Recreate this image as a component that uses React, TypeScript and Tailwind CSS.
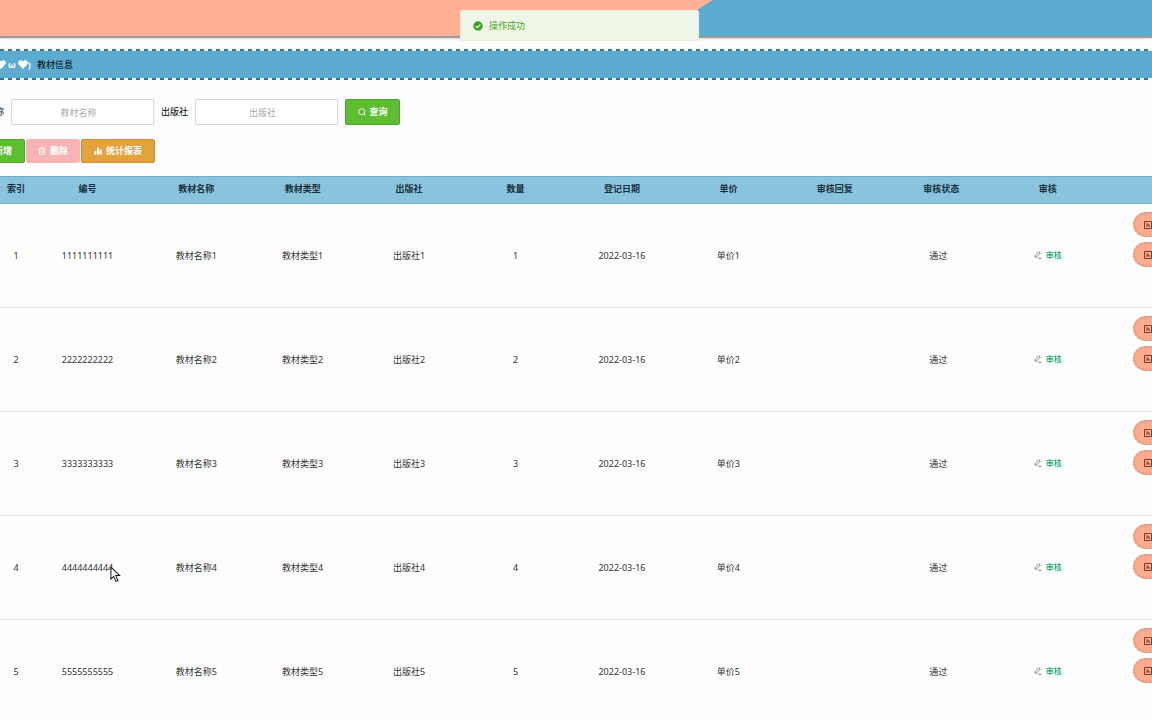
import React, { useState } from 'react';

interface Textbook {
  id: number;
  code: string;
  name: string;
  type: string;
  publisher: string;
  amount: number;
  date: string;
  price: string;
  reply: string;
  status: string;
}

const textbooks: Textbook[] = [1, 2, 3, 4, 5].map((n) => ({
  id: n,
  code: String(n).repeat(10),
  name: '教材名称' + n,
  type: '教材类型' + n,
  publisher: '出版社' + n,
  amount: n,
  date: '2022-03-16',
  price: '单价' + n,
  reply: '',
  status: '通过',
}));

const headers = ['索引', '编号', '教材名称', '教材类型', '出版社', '数量', '登记日期', '单价', '审核回复', '审核状态', '审核'];

function SearchIcon() {
  return (
    <svg viewBox="0 0 16 16" className="size-2" fill="none" stroke="currentColor" strokeWidth="1.8" aria-hidden="true">
      <circle cx="7.5" cy="7.5" r="6" />
      <path d="M12 12L15 15" />
    </svg>
  );
}

function TrashIcon() {
  return (
    <svg viewBox="0 0 16 16" className="size-2" fill="none" stroke="currentColor" strokeWidth="1.6" aria-hidden="true">
      <path d="M1 4h14M5.5 4V1.500h5V4M3 4v11h10V4M6.300 7v5M9.700 7v5" />
    </svg>
  );
}

function ChartIcon() {
  return (
    <svg viewBox="0 0 16 16" className="size-2" fill="currentColor" aria-hidden="true">
      <rect x="0.5" y="8" width="4.2" height="7" rx="1" />
      <rect x="5.9" y="1" width="4.2" height="14" rx="1" />
      <rect x="11.3" y="5" width="4.2" height="10" rx="1" />
    </svg>
  );
}

function EditIcon() {
  return (
    <svg viewBox="0 0 16 16" className="size-2 text-gray-500" fill="none" stroke="currentColor" strokeWidth="1.5" aria-hidden="true">
      <path d="M2 13l1-4.500L9 1.500l3.500 2.500L6.500 11.500zM8 14.500h7" />
    </svg>
  );
}

function DetailIcon() {
  return (
    <svg viewBox="0 0 16 16" className="size-2.5 shrink-0" fill="none" stroke="currentColor" strokeWidth="1.5" aria-hidden="true">
      <path d="M2.400 2.400h11.200v11.200H2.400zM6.500 5v6.200M6.500 8h3.500v3.200" />
    </svg>
  );
}

function Heart() {
  return (
    <svg viewBox="0 0 16 14" className="h-[9px] w-2.5" fill="currentColor" aria-hidden="true">
      <path d="M8 14L1.500 7.500C-1 4.500 .5 0 4 0c2 0 3.300 1 4 2.500C8.700 1 10 0 12 0c3.500 0 5 4.500 2.500 7.500z" />
    </svg>
  );
}

function DashedLine() {
  return <div className="h-0.5 bg-[repeating-linear-gradient(90deg,#3a7693_0_4px,#f4fafc_4px_8px)]"></div>;
}

function RowActions() {
  const className = 'flex h-[25px] w-20 items-center rounded-full border-2 border-dotted border-[#d79c86] bg-[#fcab8f] pl-2 text-[#6b3629]';
  return (
    <div className="ml-8 flex flex-col gap-[5px]">
      <button type="button" aria-label="详情" className={className}><DetailIcon /></button>
      <button type="button" aria-label="修改" className={className}><DetailIcon /></button>
    </div>
  );
}

export default function App() {
  const [name, setName] = useState('');
  const [publisher, setPublisher] = useState('');

  const inputClass = 'h-[26px] w-[143px] rounded-xs border border-[#d5d8df] bg-white pl-2 pr-4 text-center placeholder:text-[#a9abb0] outline-none';
  const cellClass = 'text-center align-middle';

  return (
    <div className="h-screen overflow-hidden bg-[#fdfdfd] font-['Noto_Sans','Noto_Sans_CJK_SC',sans-serif] text-[9px] leading-3 text-[#333]">
      <header className="flex h-[38px] border-b-2 border-[#a39698] bg-[#ffb094] shadow-sm">
        <div className="w-[57%]"></div>
        <div className="grow bg-[#5cabd0] [clip-path:polygon(56px_0,100%_0,100%_100%,0_100%)]"></div>
      </header>

      <div role="status" className="absolute top-2.5 left-1/2 flex h-[31px] w-[239px] -translate-x-[116px] items-center gap-1.5 rounded-xs border border-[#e3f0da] bg-[#eff6e8] pl-3 text-[#4fa52b]">
        <svg viewBox="0 0 16 16" className="size-2.5" aria-hidden="true">
          <circle cx="8" cy="8" r="7.500" fill="#3e9f25" />
          <path d="M4.500 8.200l2.500 2.500 4.700-5" fill="none" stroke="#fff" strokeWidth="1.8" />
        </svg>
        <p>操作成功</p>
      </div>

      <div className="mt-[11px] bg-[#5cabd0]">
        <DashedLine />
        <div className="flex h-[27px] items-center">
          <div className="-ml-1 flex items-center gap-0.5 text-white">
            <Heart />
            <b>ω</b>
            <Heart />
            <b className="-ml-0.5">)</b>
          </div>
          <h1 className="ml-1.5 text-black">教材信息</h1>
        </div>
        <DashedLine />
      </div>

      <form className="mt-[19px] -ml-8 flex items-center" onSubmit={(e) => e.preventDefault()}>
        <label htmlFor="name" className="text-black">教材名称</label>
        <input id="name" className={'ml-[7px] ' + inputClass} placeholder="教材名称" value={name} onChange={(e) => setName(e.target.value)} />
        <label htmlFor="publisher" className="ml-[7px] text-black">出版社</label>
        <input id="publisher" className={'ml-[7px] ' + inputClass} placeholder="出版社" value={publisher} onChange={(e) => setPublisher(e.target.value)} />
        <button type="submit" className="ml-[7px] flex h-[26px] w-[55px] items-center justify-center gap-1 rounded-xs border border-[#4da52c] bg-[#5dbe32] font-bold text-white">
          <SearchIcon />查询
        </button>
      </form>

      <div className="mt-3.5 -ml-8 flex gap-px font-bold text-white">
        <button type="button" className="flex h-6 w-[57px] items-center justify-end rounded-xs border border-[#4da52c] bg-[#5dbe32] pr-3">新增</button>
        <button type="button" disabled className="flex h-6 w-[54px] items-center justify-center gap-1 rounded-xs bg-[#f7b3b6]">
          <TrashIcon />删除
        </button>
        <button type="button" className="flex h-6 w-[74px] items-center justify-center gap-1 rounded-xs border border-[#cb8f35] bg-[#e4a23c]">
          <ChartIcon />统计报表
        </button>
      </div>

      <table className="mt-[13px] w-full table-fixed border-collapse">
        <colgroup>
          <col className="w-8" />
          <col className="w-[111px]" />
          <col span={9} />
          <col className="w-[51px]" />
        </colgroup>
        <thead>
          <tr className="h-[27px] border-y border-[#74aec6] bg-[#89c3dc] text-[#17303c]">
            {headers.map((header) => (
            <th key={header} scope="col" className="pb-0.5 font-bold">{header}</th>
            ))}
            <th></th>
          </tr>
        </thead>
        <tbody>
          {textbooks.map((book) => (
          <tr key={book.id} className="h-[104px] border-b border-[#e4e6ea]">
            <td className={cellClass}>{book.id}</td>
            <td className={cellClass}>{book.code}</td>
            <td className={cellClass}>{book.name}</td>
            <td className={cellClass}>{book.type}</td>
            <td className={cellClass}>{book.publisher}</td>
            <td className={cellClass}>{book.amount}</td>
            <td className={cellClass}>{book.date}</td>
            <td className={cellClass}>{book.price}</td>
            <td className={cellClass}>{book.reply}</td>
            <td className={cellClass + ' pr-1.5'}>{book.status}</td>
            <td className={cellClass}>
              <button type="button" className="inline-flex items-center gap-1 text-[8px] font-medium text-[#12a36c]">
                <EditIcon />审核
              </button>
            </td>
            <td className="overflow-hidden pt-2 align-top"><RowActions /></td>
          </tr>
          ))}
        </tbody>
      </table>

      {/* mouse pointer */}
      <svg viewBox="0 0 12 18" className="pointer-events-none absolute top-[566px] left-[110px] h-[17px] w-[11px]" aria-hidden="true">
        <path d="M1 1v13l3-3 2.500 5.500 2.200-1L6.300 10.200H10.500z" fill="#fff" stroke="#111" strokeWidth="1.1" />
      </svg>
    </div>
  );
}
